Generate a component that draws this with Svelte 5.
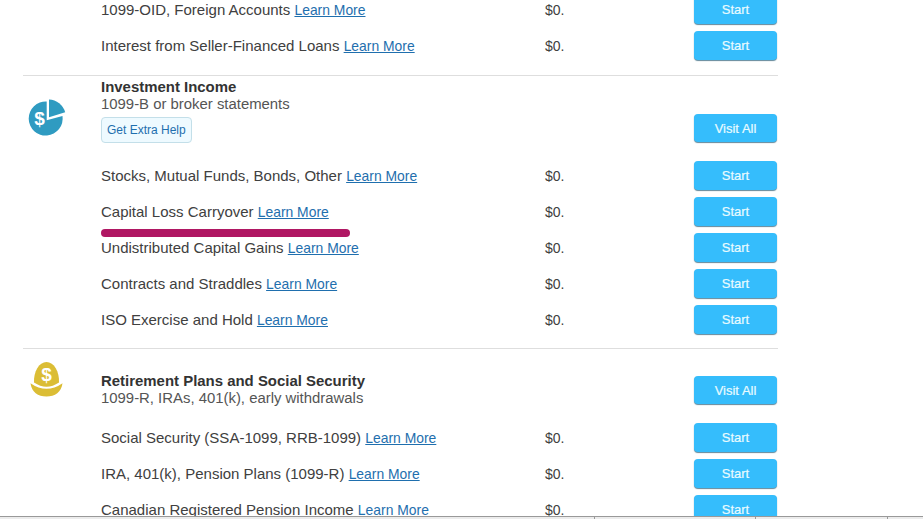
<script>
  const interest = [
    "1099-OID, Foreign Accounts",
    "Interest from Seller-Financed Loans"
  ];

  const investment = [
    "Stocks, Mutual Funds, Bonds, Other",
    "Capital Loss Carryover",
    "Undistributed Capital Gains",
    "Contracts and Straddles",
    "ISO Exercise and Hold"
  ];

  const retirement = [
    "Social Security (SSA-1099, RRB-1099)",
    "IRA, 401(k), Pension Plans (1099-R)",
    "Canadian Registered Pension Income"
  ];

  const marked = "Capital Loss Carryover";
</script>

{#snippet rows(items)}
  {#each items as item}
    <div class="row">
      <div class="label">
        {item} <a href="#learn">Learn More</a>
        {#if item === marked}<span class="marker"></span>{/if}
      </div>
      <div class="amount">$0.</div>
      <button>Start</button>
    </div>
  {/each}
{/snippet}

<div class="screen">
  <main>
    <section class="first">
      {@render rows(interest)}
    </section>

    <section>
      <header class="investment">
        <svg class="icon" width="40" height="40" viewBox="0 0 40 40">
          <path fill="#2f9bc1" d="M18.7 4.6A17 17 0 1 0 34.5 19L18.7 23.3z" />
          <path fill="#2f9bc1" d="M21 2.5A17.5 17.5 0 0 1 37.2 15.3L21 20.3z" />
          <text x="11.5" y="28" font-size="19">$</text>
        </svg>
        <div class="heading">
          <h2>Investment Income</h2>
          <p>1099-B or broker statements</p>
          <a class="help" href="#help">Get Extra Help</a>
        </div>
        <button>Visit All</button>
      </header>
      {@render rows(investment)}
    </section>

    <section>
      <header class="retirement">
        <svg class="icon" width="40" height="40" viewBox="0 0 40 40">
          <path fill="#dbbd35" d="M7 22.5C6.5 11.5 12 2 19.5 2S32.5 11.5 32 22.5Q19.5 31 7 22.5z" />
          <path fill="#dbbd35" d="M3.5 23.2Q19.5 34.5 35.5 23.2C34.5 32 28 36.5 19.5 36.5S4.5 32 3.5 23.2z" />
          <text x="19.5" y="21" font-size="19">$</text>
        </svg>
        <div class="heading">
          <h2>Retirement Plans and Social Security</h2>
          <p>1099-R, IRAs, 401(k), early withdrawals</p>
        </div>
        <button>Visit All</button>
      </header>
      {@render rows(retirement)}
    </section>
  </main>

  <footer>
    <span></span>
    <span></span>
    <span></span>
  </footer>
</div>

<style>
  :global(body) {
    background: #fff;
    overflow: hidden;
  }
  .screen {
    display: flex;
    flex-direction: column;
    height: 519px;
    overflow: hidden;
    color: #404040;
    font-family: "Liberation Sans", Arial, sans-serif;
    font-size: 15px;
  }
  main {
    flex: 1;
    min-height: 0;
    overflow: hidden;
    width: 755px;
    margin-left: 23px;
  }
  section {
    border-top: 1px solid #dedede;
    padding-bottom: 10px;
  }
  section.first {
    border: 0;
    margin-top: -8px;
    padding-bottom: 11px;
  }
  .row {
    display: flex;
    align-items: center;
    height: 36px;
    padding-left: 78px;
  }
  .label {
    position: relative;
    width: 444px;
    padding-bottom: 2px;
    white-space: nowrap;
  }
  .amount {
    flex: 1;
    font-size: 14px;
  }
  a {
    color: #1f6fae;
    font-size: 13.9px;
  }
  .marker {
    position: absolute;
    left: 0;
    top: 26px;
    width: 249px;
    height: 8px;
    border-radius: 4px;
    background: #b01763;
  }
  button {
    width: 83px;
    height: 28px;
    padding: 0;
    margin-right: 1px;
    border: 0;
    border-radius: 4px;
    background: #35bdfc;
    box-shadow: 0 1px 1px #62889b;
    color: #e9fbff;
    font-family: inherit;
    font-size: 13px;
    -webkit-text-stroke: 0.2px #e9fbff;
  }
  .row button {
    height: 29px;
    margin-bottom: 2px;
  }
  header {
    display: flex;
    align-items: flex-start;
  }
  .investment {
    height: 82px;
  }
  .retirement {
    height: 71px;
  }
  .icon {
    flex: none;
    margin: 21px 33px 0 5px;
  }
  .icon text {
    fill: #fff;
    font-weight: bold;
    text-anchor: middle;
  }
  .heading {
    flex: 1;
    padding-top: 2px;
  }
  .investment button {
    margin-top: 38px;
  }
  .retirement .icon {
    margin: 11px 34px 0 4px;
  }
  .retirement .heading {
    padding-top: 23px;
  }
  .retirement button {
    margin-top: 27px;
  }
  h2,
  p {
    margin: 0;
    line-height: 17px;
  }
  h2 {
    margin-bottom: 1px;
    color: #333;
    font-size: 14.95px;
  }
  p {
    color: #555;
    font-size: 14.9px;
  }
  .help {
    display: inline-block;
    box-sizing: border-box;
    height: 26px;
    margin-top: 4px;
    padding: 0 5px;
    border: 1px solid #c3dfe9;
    border-radius: 4px;
    background: #eefaff;
    font-size: 12px;
    line-height: 24px;
    text-decoration: none;
  }
  footer {
    flex: none;
    display: flex;
    height: 2px;
    border-top: 1px solid #999;
    background: #ececec;
  }
  footer span {
    box-sizing: border-box;
    width: 595px;
    border-right: 1px solid #999;
  }
  footer span:nth-child(2) {
    width: 161px;
  }
  footer span:nth-child(3) {
    width: 132px;
  }
</style>
